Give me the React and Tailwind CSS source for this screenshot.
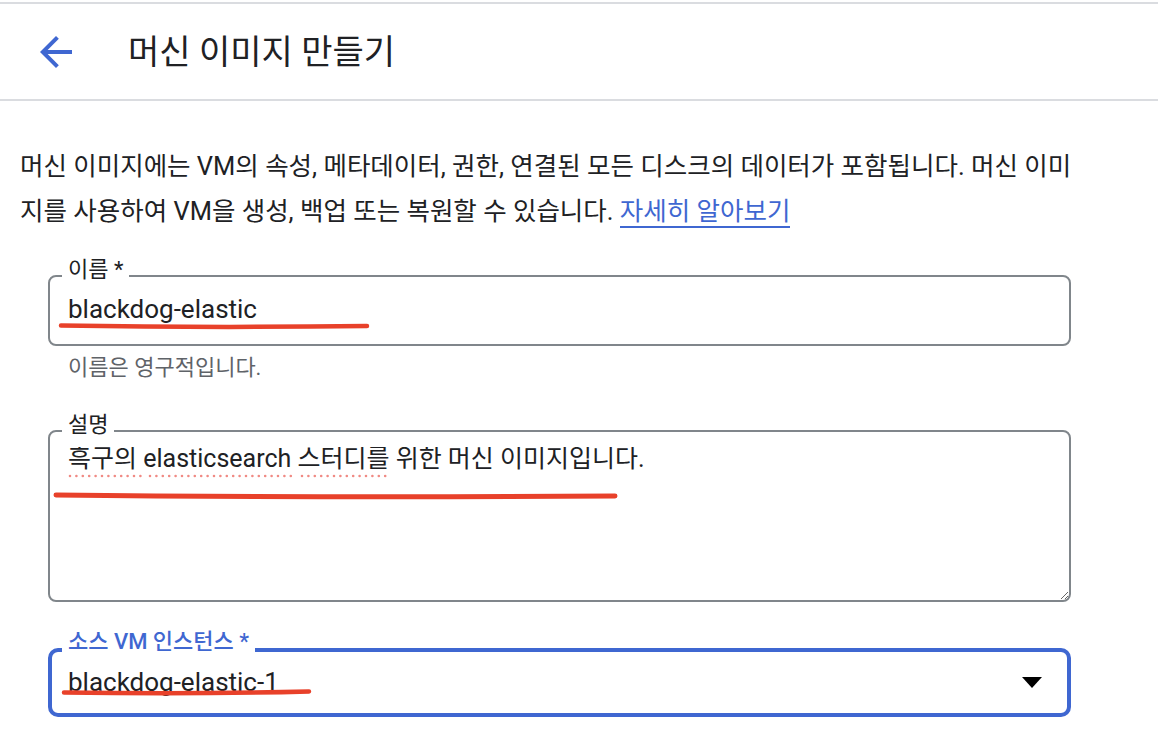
import { useState } from "react";

const BLUE = "#3f67d1";

// annotation strokes drawn over the form (hand marker + spellcheck dots)
function Annotations() {
  return (
    <svg
      className="absolute top-0 left-0 pointer-events-none"
      width="1158"
      height="754"
      viewBox="0 0 1158 754"
    >
      <g stroke="#f08a84" strokeWidth="2.6" strokeLinecap="round" strokeDasharray="0 6.4" fill="none">
        <line x1="70" y1="476" x2="141" y2="476" />
        <line x1="150" y1="476" x2="293" y2="476" />
        <line x1="302" y1="476" x2="388" y2="476" />
      </g>
      <g stroke="#e8412a" strokeLinecap="round" fill="none">
        <path d="M61 325.5 Q 210 328 367 326" strokeWidth="4.5" />
        <path d="M56 495 Q 330 498 615 496" strokeWidth="5" />
        <path d="M64 692.5 Q 190 694.5 309 691.5" strokeWidth="4.5" />
      </g>
    </svg>
  );
}

export default function App() {
  const [name, setName] = useState("blackdog-elastic");
  const [desc, setDesc] = useState("흑구의 elasticsearch 스터디를 위한 머신 이미지입니다.");

  return (
    <div className="relative w-[1158px] h-[754px] overflow-hidden bg-white text-[#202124] font-['Roboto','Noto_Sans_CJK_KR',sans-serif]">
      <header className="mt-[2px] h-[99px] border-t-2 border-b-2 border-[#dadce0] flex items-center">
        <button className="ml-[32px] w-[48px] h-[48px] flex items-center justify-center" aria-label="뒤로">
          <svg width="48" height="48" viewBox="0 0 24 24" fill={BLUE}>
            <path d="M20 11H7.83l5.59-5.59L12 4l-8 8 8 8 1.41-1.41L7.83 13H20v-2z" />
          </svg>
        </button>
        <h1 className="ml-[48px] text-[34px] leading-[40px] font-normal">머신 이미지 만들기</h1>
      </header>

      <main className="px-[20px] pt-[43px]">
        <p className="w-[1072px] text-[25.5px] leading-[45px]">
          머신 이미지에는 VM의 속성, 메타데이터, 권한, 연결된 모든 디스크의 데이터가 포함됩니다. 머신 이미지를 사용하여 VM을 생성, 백업 또는 복원할 수 있습니다.{" "}
          <a href="#" className="text-[#3f67d1] border-b-2 border-[#3f67d1]">자세히 알아보기</a>
        </p>

        {/* 이름 */}
        <fieldset className="mt-[26px] ml-[28px] w-[1023px] border-2 border-[#80868b] rounded-[8px] px-[18px] pt-[3px] pb-[19px]">
          <legend className="-ml-[6px] px-[6px] pb-[12px] text-[22px] leading-[20px]">이름 *</legend>
          <input
            value={name}
            onChange={(e) => setName(e.target.value)}
            className="w-full h-[28px] text-[26px] leading-[28px] outline-none bg-transparent"
          />
        </fieldset>
        <p className="ml-[48px] mt-[10px] text-[22px] leading-[24px] text-[#5f6368]">이름은 영구적입니다.</p>

        {/* 설명 */}
        <fieldset className="mt-[35px] ml-[28px] w-[1023px] border-2 border-[#80868b] rounded-[8px] pl-[18px]">
          <legend className="-ml-[6px] px-[6px] pb-[12px] text-[22px] leading-[20px]">설명</legend>
          <textarea
            value={desc}
            onChange={(e) => setDesc(e.target.value)}
            spellCheck={false}
            className="block w-full h-[153px] pr-[18px] text-[25px] leading-[24px] outline-none bg-transparent resize-y"
          />
        </fieldset>

        {/* 소스 VM 인스턴스 */}
        <fieldset className="mt-[30px] ml-[28px] w-[1023px] border-4 border-[#3f67d1] rounded-[10px] pl-[16px] pr-[25px] pb-[17px]">
          <legend className="-ml-[6px] px-[6px] pb-[16px] text-[22px] leading-[20px] font-medium text-[#3f67d1]">소스 VM 인스턴스 *</legend>
          <div role="combobox" aria-expanded="false" className="flex items-center h-[28px] cursor-pointer">
            <span className="flex-1 text-[26px] leading-[28px]">blackdog-elastic-1</span>
            <svg width="20" height="11" viewBox="0 0 20 11">
              <polygon points="0,0 20,0 10,11" fill="#000" />
            </svg>
          </div>
        </fieldset>
      </main>

      <Annotations />
    </div>
  );
}
